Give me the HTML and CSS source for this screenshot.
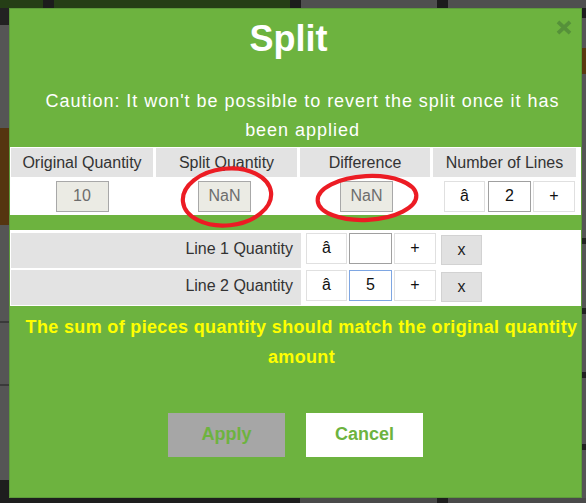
FILE: index.html
```html
<!DOCTYPE html>
<html lang="en">
<head>
<meta charset="utf-8">
<title>Split</title>
<link rel="stylesheet" href="styles.css">
</head>
<body>
<div class="modal">
  <button class="close" type="button" aria-label="Close">
    <svg width="16" height="15" viewBox="0 0 16 15"><path d="M2 1.8 L14 13.2 M14 1.8 L2 13.2" stroke="#56913a" stroke-width="3.8" fill="none"/></svg>
  </button>
  <div class="modal-header"><h2 class="title">Split</h2></div>
  <p class="caution">Caution: It won't be possible to revert the split once it has been applied</p>

  <div class="summary">
    <div class="hcell">Original Quantity</div>
    <div class="hcell">Split Quantity</div>
    <div class="hcell">Difference</div>
    <div class="hcell">Number of Lines</div>
    <div class="dcell"><input class="ro" type="text" value="10" readonly></div>
    <div class="dcell"><input class="ro shift-l" type="text" value="NaN" readonly></div>
    <div class="dcell"><input class="ro shift-r" type="text" value="NaN" readonly></div>
    <div class="dcell ctl-cell">
      <button class="step" type="button">â</button>
      <input class="num" type="text" value="2">
      <button class="step plus" type="button">+</button>
    </div>
    <svg class="marks" width="570" height="100" viewBox="0 0 570 100">
      <ellipse cx="217" cy="50" rx="44.3" ry="28.4" transform="rotate(-6 217 50)" />
      <ellipse cx="357" cy="51" rx="49.4" ry="21.9" transform="rotate(-3 357 51)" />
    </svg>
  </div>

  <div class="lines">
    <div class="line-row">
      <div class="label">Line 1 Quantity</div>
      <div class="ctl">
        <button class="step" type="button">â</button>
        <input class="num" type="text" value="">
        <button class="step plus" type="button">+</button>
        <button class="del" type="button">x</button>
      </div>
    </div>
    <div class="line-row">
      <div class="label">Line 2 Quantity</div>
      <div class="ctl">
        <button class="step" type="button">â</button>
        <input class="num focus" type="text" value="5">
        <button class="step plus" type="button">+</button>
        <button class="del" type="button">x</button>
      </div>
    </div>
  </div>

  <p class="warn">The sum of pieces quantity should match the original quantity amount</p>

  <div class="actions">
    <button class="btn apply" type="button">Apply</button>
    <button class="btn cancel" type="button">Cancel</button>
  </div>
</div>
</body>
</html>
```

FILE: styles.css
```css
html, body {
  margin: 0;
  padding: 0;
}
body {
  width: 586px;
  height: 503px;
  overflow: hidden;
  font-family: "Liberation Sans", Arial, sans-serif;
  box-sizing: border-box;
  padding-top: 8px;
  background:
    linear-gradient(to right, #253e16 0 43px, #1c1c1c 43px 54px, #253e16 54px 290px, #1c1c1c 290px 301px, #4f4f4f 301px 437px, #1c1c1c 437px 448px, #4f4f4f 448px) left top / 100% 8px no-repeat,
    linear-gradient(to right, #1e1e1e 0 300px, #4a4a4a 300px 437px, #1e1e1e 437px 448px, #4a4a4a 448px) left bottom / 100% 5px no-repeat,
    linear-gradient(to bottom, #222 0 25px, #555 25px 128px, #553510 128px 225px, #555 225px 321px, #3a3a3a 321px 323px, #555 323px 384px, #3a3a3a 384px 386px, #555 386px 480px, #1e1e1e 480px) left top / 9px 100% no-repeat,
    linear-gradient(to bottom, #505050 0 8px, #1e1e1e 8px 18px, #555 18px 48px, #5a3a10 48px 74px, #555 74px 238px, #222 238px 244px, #555 244px 308px, #222 308px 314px, #555 314px 372px, #222 372px 378px, #555 378px 444px, #222 444px 450px, #555 450px) right top / 5px 100% no-repeat,
    #333;
}

.modal {
  position: relative;
  margin-left: 9px;
  width: 573px;
  height: 490px;
  box-sizing: border-box;
  background: #6db33f;
  border: 1px solid #5d9b3a;
  display: flex;
  flex-direction: column;
}

.close {
  position: absolute;
  top: 11px;
  right: 9px;
  padding: 0;
  margin: 0;
  border: 0;
  background: transparent;
  line-height: 0;
  cursor: pointer;
}

.modal-header {
  padding: 10px 14px 0 0;
}
.title {
  margin: 0;
  font-size: 36px;
  line-height: 40px;
  font-weight: bold;
  color: #fff;
  text-align: center;
}

.caution {
  margin: 28px 0 0;
  padding-left: 14px;
  font-size: 18px;
  letter-spacing: 0.97px;
  line-height: 29.4px;
  color: #fff;
  text-align: center;
}

.summary {
  position: relative;
  margin-top: 1px;
  background: #fff;
  padding: 1px 4px 0 1px;
  display: grid;
  grid-template-columns: 142px 141px 130px 143px;
  grid-template-rows: 29px 38px;
  column-gap: 3px;
}
.hcell {
  background: #e3e3e3;
  color: #333;
  font-size: 16px;
  display: flex;
  align-items: center;
  justify-content: center;
  padding-top: 1px;
}
.dcell {
  display: flex;
  justify-content: center;
  align-items: flex-start;
  padding-top: 4px;
}
.ro {
  width: 53px;
  height: 31px;
  box-sizing: border-box;
  border: 1px solid #a8a8a8;
  background: #ebebe4;
  color: #6d6d6d;
  font-family: "Liberation Sans", Arial, sans-serif;
  font-size: 16px;
  text-align: center;
  padding: 0;
  outline: none;
}
.shift-l { margin-left: -4px; }
.shift-r { margin-left: 3px; }

.ctl-cell {
  justify-content: flex-start;
  padding-left: 11px;
}
.ctl-cell .num { margin-left: 3px; }
.ctl-cell .plus { margin-left: 2px; }

.step {
  width: 41px;
  height: 31px;
  box-sizing: border-box;
  border: 1px solid #e0e0e0;
  background: #fff;
  color: #111;
  font-family: "Liberation Sans", Arial, sans-serif;
  font-size: 16px;
  padding: 0;
}
.step.plus { width: 42px; }
.num {
  width: 43px;
  height: 31px;
  box-sizing: border-box;
  border: 1px solid #a0a0a0;
  background: #fff;
  color: #111;
  font-family: "Liberation Sans", Arial, sans-serif;
  font-size: 16px;
  text-align: center;
  padding: 0;
  outline: none;
}
.num.focus {
  border-color: #7ea6e2;
}

.marks {
  position: absolute;
  left: 0;
  top: 0;
  overflow: visible;
  pointer-events: none;
}
.marks ellipse {
  fill: none;
  stroke: #ec1c24;
  stroke-width: 4.2;
}

.lines {
  margin-top: 15px;
  background: #fff;
  padding: 3px 0 1px 1px;
  display: flex;
  flex-direction: column;
  gap: 2px;
}
.line-row {
  display: flex;
  height: 35px;
}
.label {
  width: 290px;
  box-sizing: border-box;
  background: #e3e3e3;
  color: #333;
  font-size: 16px;
  display: flex;
  align-items: center;
  justify-content: flex-end;
  padding-right: 8px;
  padding-bottom: 3px;
}
.ctl {
  display: flex;
  align-items: flex-start;
  margin-left: 5px;
  gap: 2px;
}
.del {
  width: 41px;
  height: 30px;
  margin-top: 2px;
  margin-left: 3px;
  box-sizing: border-box;
  border: 1px solid #d2d2d2;
  background: #e1e1e1;
  color: #222;
  font-family: "Liberation Sans", Arial, sans-serif;
  font-size: 16px;
  padding: 0;
}

.warn {
  margin: 6px 0 0;
  padding-left: 12px;
  font-size: 18px;
  letter-spacing: 0.34px;
  line-height: 30px;
  font-weight: bold;
  color: #ffff00;
  text-align: center;
}

.actions {
  margin-top: 41px;
  display: flex;
  justify-content: center;
  gap: 21px;
}
.btn {
  width: 117px;
  height: 44px;
  border: 0;
  padding: 0;
  font-family: "Liberation Sans", Arial, sans-serif;
  font-size: 18px;
  font-weight: bold;
  color: #6db33f;
}
.apply { background: #a6a6a6; }
.cancel { background: #fff; }
```
